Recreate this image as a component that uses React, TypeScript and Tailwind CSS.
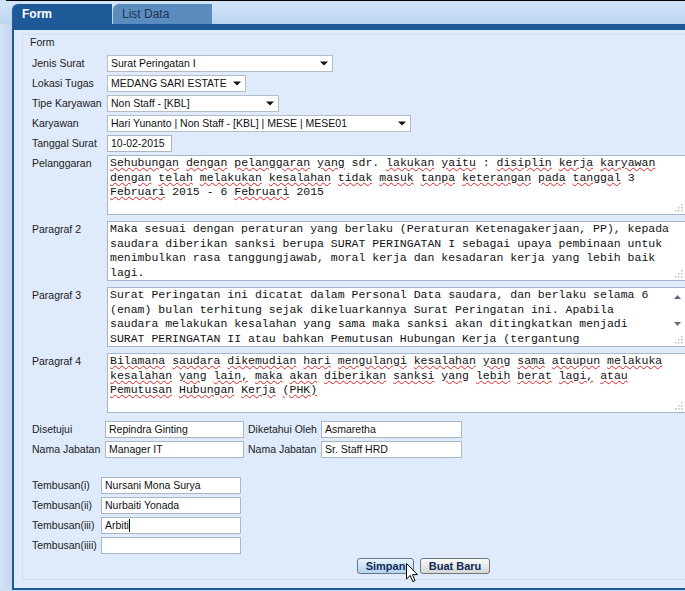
import React from "react";

const sans = "font-['Liberation_Sans',Arial,sans-serif]";
const mono = "font-['Liberation_Mono','Courier_New',monospace]";

type Para = { label: string; lines: string[]; check?: boolean; scroll?: boolean };

const paragraphs: Para[] = [
  {
    label: "Pelanggaran",
    check: true,
    lines: [
      "Sehubungan dengan pelanggaran yang sdr. lakukan yaitu : disiplin kerja karyawan",
      "dengan telah melakukan kesalahan tidak masuk tanpa keterangan pada tanggal 3",
      "Februari 2015 - 6 Februari 2015",
    ],
  },
  {
    label: "Paragraf 2",
    lines: [
      "Maka sesuai dengan peraturan yang berlaku (Peraturan Ketenagakerjaan, PP), kepada",
      "saudara diberikan sanksi berupa SURAT PERINGATAN I sebagai upaya pembinaan untuk",
      "menimbulkan rasa tanggungjawab, moral kerja dan kesadaran kerja yang lebih baik",
      "lagi.",
    ],
  },
  {
    label: "Paragraf 3",
    scroll: true,
    lines: [
      "Surat Peringatan ini dicatat dalam Personal Data saudara, dan berlaku selama 6",
      "(enam) bulan terhitung sejak dikeluarkannya Surat Peringatan ini. Apabila",
      "saudara melakukan kesalahan yang sama maka sanksi akan ditingkatkan menjadi",
      "SURAT PERINGATAN II atau bahkan Pemutusan Hubungan Kerja (tergantung",
    ],
  },
  {
    label: "Paragraf 4",
    check: true,
    lines: [
      "Bilamana saudara dikemudian hari mengulangi kesalahan yang sama ataupun melakuka",
      "kesalahan yang lain, maka akan diberikan sanksi yang lebih berat lagi, atau",
      "Pemutusan Hubungan Kerja (PHK)",
    ],
  },
];

const selects = [
  { label: "Jenis Surat", value: "Surat Peringatan I", w: "w-[226px]" },
  { label: "Lokasi Tugas", value: "MEDANG SARI ESTATE", w: "w-[139px]" },
  { label: "Tipe Karyawan", value: "Non Staff - [KBL]", w: "w-[172px]" },
  { label: "Karyawan", value: "Hari Yunanto | Non Staff - [KBL] | MESE | MESE01", w: "w-[304px]" },
];

const tembusan = [
  { label: "Tembusan(i)", value: "Nursani Mona Surya" },
  { label: "Tembusan(ii)", value: "Nurbaiti Yonada" },
  { label: "Tembusan(iii)", value: "Arbiti", caret: true },
  { label: "Tembusan(iiii)", value: "" },
];

function Checked({ text }: { text: string }) {
  // wavy red underline under words, like the browser spell checker
  const parts = text.split(/(\s+)/);
  return (
    <>
      {parts.map((p, i) =>
        /[A-Za-z]{2,}/.test(p) && p !== "sdr." ? (
          <span key={i} className="underline decoration-wavy decoration-[#e02020] decoration-1 underline-offset-[1px]">
            {p}
          </span>
        ) : (
          <span key={i}>{p}</span>
        )
      )}
    </>
  );
}

function Grip() {
  return (
    <svg className="absolute right-[2px] bottom-[2px]" width="9" height="9" viewBox="0 0 9 9">
      {[
        [7, 1],
        [4, 4],
        [7, 4],
        [1, 7],
        [4, 7],
        [7, 7],
      ].map(([x, y], i) => (
        <rect key={i} x={x} y={y} width="1.5" height="1.5" fill="#b9c2cc" />
      ))}
    </svg>
  );
}

function Caret() {
  return (
    <svg width="8" height="5" viewBox="0 0 8 5" className="shrink-0">
      <path d="M0 0.5 H8 L4 4.5 Z" fill="#111" />
    </svg>
  );
}

function SelectBox({ value, w }: { value: string; w: string }) {
  return (
    <div className={`${w} h-[17px] bg-white border border-[#b3bdc8] flex items-center pl-[3px] pr-[4px] gap-1`}>
      <span className="flex-1 whitespace-nowrap overflow-hidden text-[#111]">{value}</span>
      <Caret />
    </div>
  );
}

function TextBox({ value, w, caret }: { value: string; w: string; caret?: boolean }) {
  return (
    <div className={`${w} h-[17px] bg-white border border-[#a9b6c6] flex items-center pl-[3px] text-[#111] whitespace-nowrap overflow-hidden`}>
      {value}
      {caret && <span className="inline-block w-px h-[13px] bg-black" />}
    </div>
  );
}

export default function App() {
  return (
    <div className={`${sans} w-[685px] h-[591px] overflow-hidden bg-[#c9dcf2] text-[10.5px] text-[#222]`}>
      <div className="h-px ml-[6px] bg-black" />

      {/* tab strip */}
      <div className="h-[23px] flex items-end pl-[12px] gap-px bg-gradient-to-b from-[#d3e4f8] to-[#bcd4f0]">
        <div className="w-[100px] h-[20px] rounded-tl-[6px] bg-[#1f5a98] text-white font-bold text-[12px] pl-[10px] flex items-center">
          Form
        </div>
        <div className="w-[99px] h-[20px] rounded-tl-[6px] bg-[#5b8cc0] text-[#1d3553] text-[12px] pl-[9px] flex items-center">
          List Data
        </div>
      </div>

      <div className="flex h-[566px]">
        <div className="w-[12px] bg-gradient-to-r from-[#d4e3f6] to-[#c3d7f0]" />
        <div className="flex-1 bg-[#dfeafb] border-l-2 border-t-[6px] border-b-2 border-[#1f5a98] pl-[8px] pt-[4px] overflow-hidden">
          <div className="w-[700px] h-[546px] border border-[#d2dfef] pl-[9px] flex flex-col">
            <div className="h-[14px] leading-[14px] -ml-[2px]">Form</div>

            <div className="mt-[6px] flex flex-col gap-[3px]">
              {selects.map((s) => (
                <div key={s.label} className="flex items-center">
                  <div className="w-[75px]">{s.label}</div>
                  <SelectBox value={s.value} w={s.w} />
                </div>
              ))}
              <div className="flex items-center">
                <div className="w-[75px]">Tanggal Surat</div>
                <TextBox value="10-02-2015" w="w-[65px]" />
              </div>
            </div>

            <div className="mt-[3px] flex flex-col gap-[6px]">
              {paragraphs.map((p) => (
                <div key={p.label} className="flex items-start">
                  <div className="w-[75px] pt-[1px]">{p.label}</div>
                  <div
                    className={`${mono} relative w-[579px] h-[60px] bg-white border border-[#a3b6cd] pl-[2px] text-[11.5px] leading-[14.6px] text-[#111] overflow-hidden`}
                  >
                    {p.lines.map((l, i) => (
                      <div key={i} className="whitespace-pre">
                        {p.check ? <Checked text={l} /> : l}
                      </div>
                    ))}
                    {p.scroll && (
                      <div className="absolute right-0 top-0 bottom-0 w-[17px] bg-white">
                        <svg className="absolute left-[6px] top-[7px]" width="7" height="4" viewBox="0 0 7 4">
                          <path d="M0 4 L3.5 0 L7 4 Z" fill="#5a6b86" />
                        </svg>
                        <svg className="absolute left-[6px] top-[34px]" width="7" height="4" viewBox="0 0 7 4">
                          <path d="M0 0 L3.5 4 L7 0 Z" fill="#5a6b86" />
                        </svg>
                      </div>
                    )}
                    <Grip />
                  </div>
                </div>
              ))}
            </div>

            <div className="mt-[8px] flex flex-col gap-[3px]">
              <div className="flex items-center">
                <div className="w-[73px]">Disetujui</div>
                <TextBox value="Repindra Ginting" w="w-[139px]" />
                <div className="w-[73px] ml-[4px]">Diketahui Oleh</div>
                <TextBox value="Asmaretha" w="w-[141px]" />
              </div>
              <div className="flex items-center">
                <div className="w-[73px]">Nama Jabatan</div>
                <TextBox value="Manager IT" w="w-[139px]" />
                <div className="w-[73px] ml-[4px]">Nama Jabatan</div>
                <TextBox value="Sr. Staff HRD" w="w-[141px]" />
              </div>
            </div>

            <div className="mt-[19px] flex flex-col gap-[3px]">
              {tembusan.map((t) => (
                <div key={t.label} className="flex items-center">
                  <div className="w-[69px]">{t.label}</div>
                  <TextBox value={t.value} w="w-[140px]" caret={t.caret} />
                </div>
              ))}
            </div>

            <div className="mt-[4px] ml-[325px] flex gap-[6px] relative">
              <button className="w-[57px] h-[16px] rounded-[3px] border border-[#6a7686] bg-gradient-to-b from-[#e6f2fc] to-[#b3d4f1] font-bold text-[11px] text-[#0d2b57] leading-none">
                Simpan
              </button>
              <button className="w-[70px] h-[16px] rounded-[3px] border border-[#6f7780] bg-gradient-to-b from-[#fbfbfb] to-[#d6d6d6] font-bold text-[11px] text-[#0d2b57] leading-none">
                Buat Baru
              </button>
              {/* mouse pointer hovering Simpan */}
              <svg className="absolute left-[49px] top-[5px]" width="13" height="21" viewBox="0 0 13 21">
                <path d="M0.5 0.5 L0.5 16 L4.2 12.4 L6.8 18.6 L9 17.6 L6.5 11.6 L11.5 11.6 Z" fill="#fff" stroke="#000" strokeWidth="1" strokeLinejoin="round" />
              </svg>
            </div>
          </div>
        </div>
      </div>
    </div>
  );
}
